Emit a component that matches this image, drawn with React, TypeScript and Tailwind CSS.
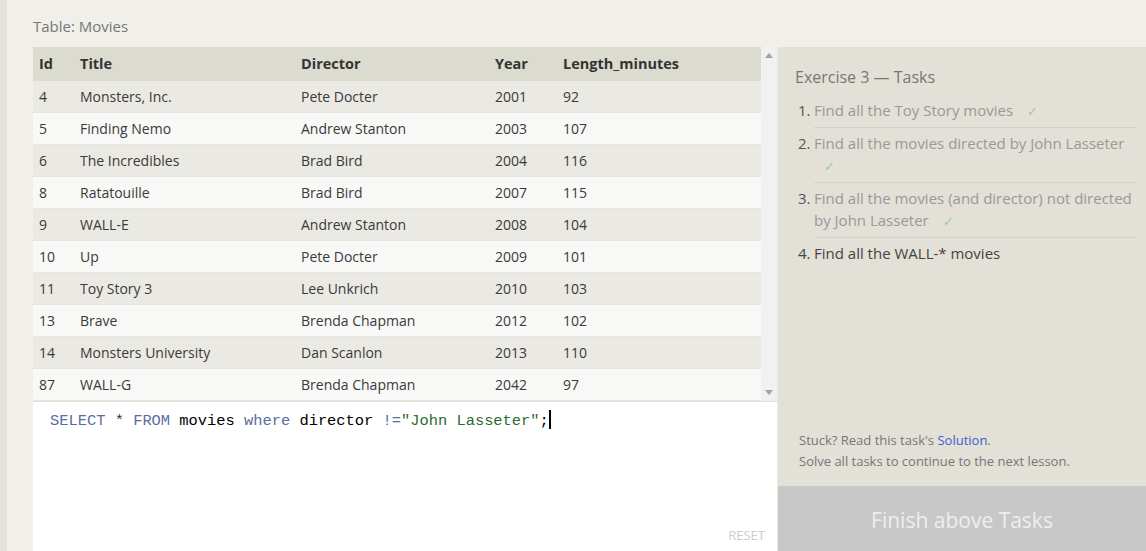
import React from "react";

const rows = [
  ["4", "Monsters, Inc.", "Pete Docter", "2001", "92"],
  ["5", "Finding Nemo", "Andrew Stanton", "2003", "107"],
  ["6", "The Incredibles", "Brad Bird", "2004", "116"],
  ["8", "Ratatouille", "Brad Bird", "2007", "115"],
  ["9", "WALL-E", "Andrew Stanton", "2008", "104"],
  ["10", "Up", "Pete Docter", "2009", "101"],
  ["11", "Toy Story 3", "Lee Unkrich", "2010", "103"],
  ["13", "Brave", "Brenda Chapman", "2012", "102"],
  ["14", "Monsters University", "Dan Scanlon", "2013", "110"],
  ["87", "WALL-G", "Brenda Chapman", "2042", "97"],
];

const cols = "grid grid-cols-[41px_221px_194px_68px_1fr]";

function Check() {
  return <span className="ml-[10px] text-[13px] text-[#9ccb9c]">✓</span>;
}

export default function App() {
  return (
    <div
      className="w-[1146px] h-[551px] overflow-hidden flex bg-[#f1efe9] text-[#333]"
      style={{ fontFamily: '"Open Sans", "Noto Sans", sans-serif' }}
    >
      <div className="w-[7px] h-full bg-[#e4e1db]" />
      <div className="flex-1 flex flex-col pl-[26px]">
        <div className="h-[47px] flex items-center text-[15px] text-[#777] pt-[5px]">
          Table: Movies
        </div>
        <div className="flex flex-1 min-h-0">
          <div className="w-[744px] flex flex-col">
            <div className="flex h-[355px] border-b border-[#e0e0dc]">
              <div className="w-[728px] flex flex-col text-[14px]">
                <div className={`${cols} h-[34px] items-center bg-[#dcdbd0] font-bold text-[14.5px] text-[#333]`}>
                  <div className="pl-[6px]">Id</div>
                  <div className="pl-[6px]">Title</div>
                  <div className="pl-[6px]">Director</div>
                  <div className="pl-[6px]">Year</div>
                  <div className="pl-[6px]">Length_minutes</div>
                </div>
                {rows.map((r, i) => (
                  <div
                    key={i}
                    className={`${cols} h-[32px] items-center border-b border-[#e6e5e0] ${
                      i % 2 === 0 ? "bg-[#eae9e3]" : "bg-[#f8f8f7]"
                    }`}
                  >
                    {r.map((c, j) => (
                      <div key={j} className="pl-[6px] text-[#3a3a3a]">
                        {c}
                      </div>
                    ))}
                  </div>
                ))}
              </div>
              <div className="w-[16px] bg-[#f1f1f1] flex flex-col items-center justify-between py-[6px]">
                <svg width="8" height="5" viewBox="0 0 8 5">
                  <path d="M4 0L8 5H0z" fill="#a3a3a3" />
                </svg>
                <svg width="8" height="5" viewBox="0 0 8 5">
                  <path d="M0 0h8L4 5z" fill="#a3a3a3" />
                </svg>
              </div>
            </div>
            <div className="flex-1 bg-white flex flex-col relative">
              <div
                className="pl-[17px] pt-[9px] text-[15.4px] leading-[20px] whitespace-pre"
                style={{ fontFamily: '"Liberation Mono", "DejaVu Sans Mono", monospace' }}
              >
                <span className="text-[#5a6da0]">SELECT</span>
                <span className="text-[#333]"> * </span>
                <span className="text-[#5a6da0]">FROM</span>
                <span className="text-black"> movies </span>
                <span className="text-[#5a6da0]">where</span>
                <span className="text-black"> director </span>
                <span className="text-[#5a6da0]">!=</span>
                <span className="text-[#2e6b2e]">"John Lasseter"</span>
                <span className="text-black">;</span>
                <span className="inline-block w-[2px] h-[19px] bg-black align-middle -mt-[3px]" />
              </div>
              <div className="mt-auto self-end pr-[12px] pb-[6px] text-[13px] text-[#ccc]">RESET</div>
            </div>
          </div>
          <div className="w-[1px] bg-[#ebe9e3]" />
          <div className="flex-1 flex flex-col">
            <div className="flex-1 bg-[#e2e0d7] flex flex-col pl-[17px] pr-[10px]">
              <div className="pt-[18px] text-[16px] text-[#777]">Exercise 3 — Tasks</div>
              <ol className="mt-[10px] text-[15px] leading-[22px]">
                <li className="flex pl-[3px]">
                  <span className="text-[#555] w-[16px]">1.</span>
                  <div className="flex-1 text-[#999] border-b border-[#d3d1c9] pb-[5px]">
                    Find all the Toy Story movies <Check />
                  </div>
                </li>
                <li className="flex pl-[3px] pt-[4px]">
                  <span className="text-[#555] w-[16px]">2.</span>
                  <div className="flex-1 text-[#999] border-b border-[#d3d1c9] pb-[5px]">
                    Find all the movies directed by John Lasseter
                    <br />
                    <Check />
                  </div>
                </li>
                <li className="flex pl-[3px] pt-[4px]">
                  <span className="text-[#555] w-[16px]">3.</span>
                  <div className="flex-1 text-[#999] border-b border-[#d3d1c9] pb-[5px]">
                    Find all the movies (and director) not directed by John Lasseter <Check />
                  </div>
                </li>
                <li className="flex pl-[3px] pt-[4px]">
                  <span className="text-[#444] w-[16px]">4.</span>
                  <div className="flex-1 text-[#444]">Find all the WALL-* movies</div>
                </li>
              </ol>
              <div className="mt-auto pb-[14px] pl-[4px] text-[13px] leading-[21px] text-[#777]">
                <div>
                  Stuck? Read this task's <span className="text-[#3a62c9]">Solution</span>.
                </div>
                <div>Solve all tasks to continue to the next lesson.</div>
              </div>
            </div>
            <div className="h-[65px] bg-[#c8c8c8] flex items-center justify-center pt-[5px] text-[21px] text-[#eeeeee]">
              Finish above Tasks
            </div>
          </div>
        </div>
      </div>
    </div>
  );
}
